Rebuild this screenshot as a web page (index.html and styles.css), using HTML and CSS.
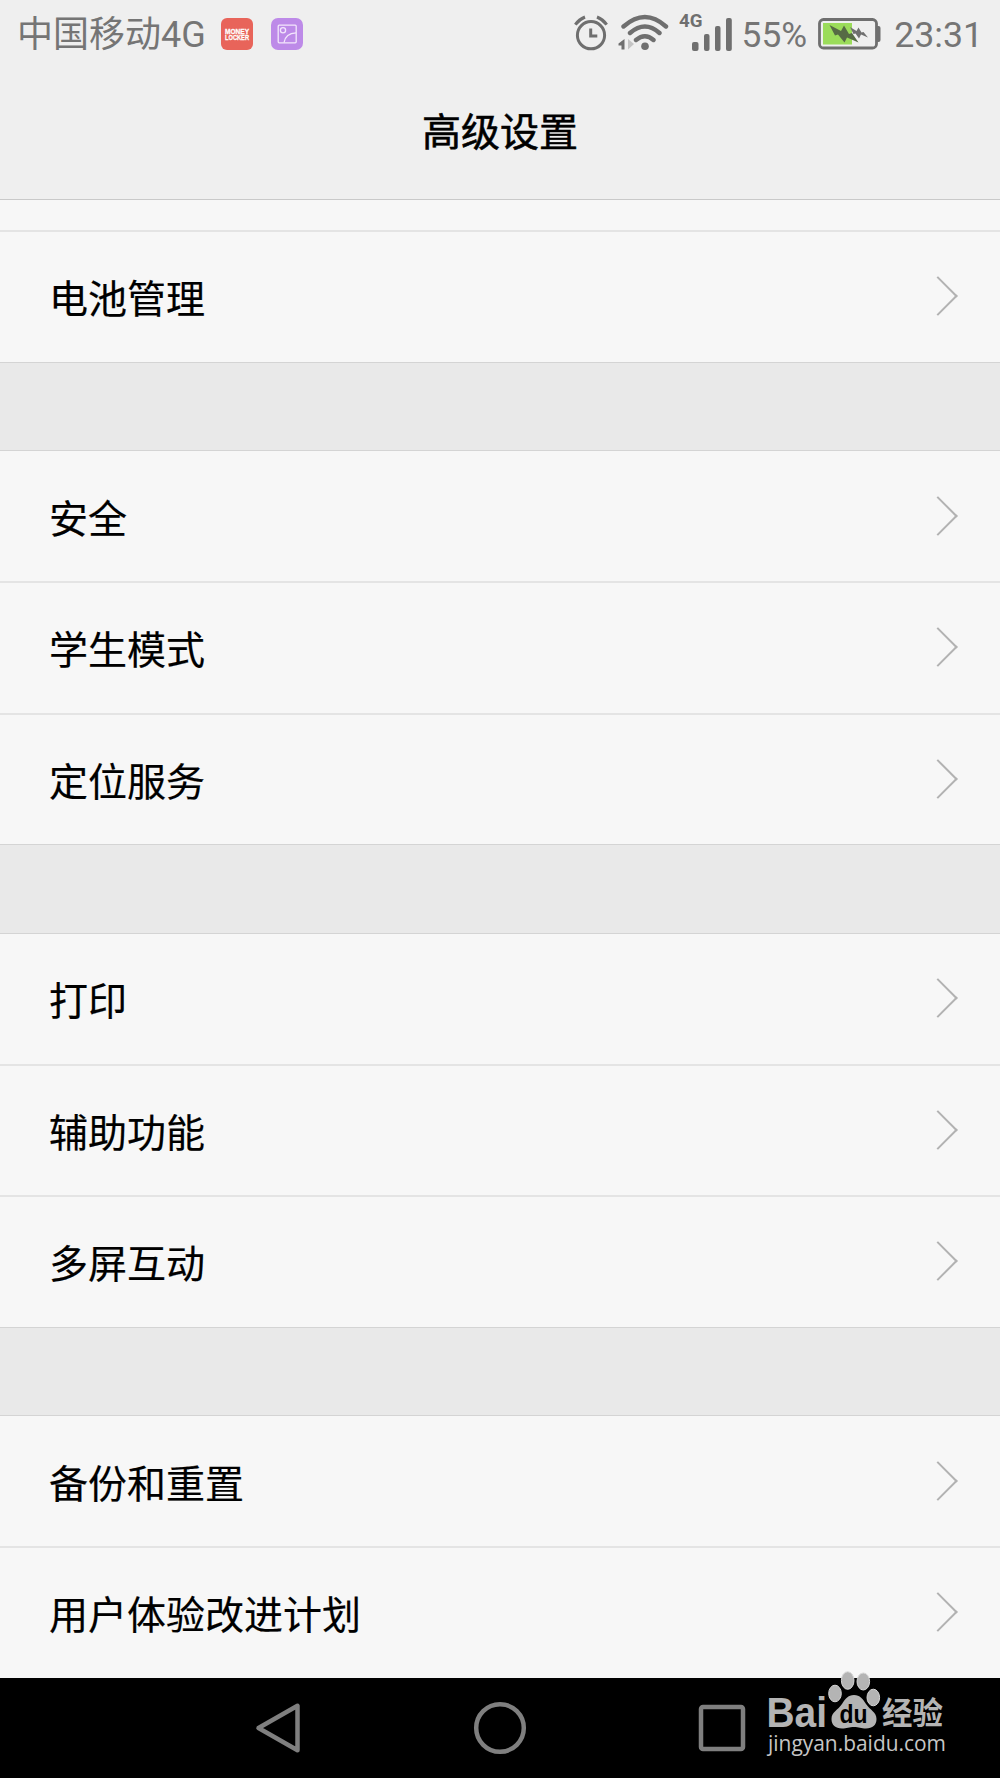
FILE: index.html
```
<!DOCTYPE html>
<html lang="zh-CN">
<head>
  <meta charset="UTF-8">
  <meta name="viewport" content="width=device-width, initial-scale=1.0">
  <title>高级设置</title>
  <link rel="stylesheet" href="styles.css">
</head>
<body>
  <div class="screen">
    <!-- Status bar -->
    <div class="status-bar">
      <span class="carrier">中国移动4G</span>
      <svg class="app-icon" width="32" height="32" viewBox="0 0 32 32">
        <rect width="32" height="32" rx="6" fill="#e8645a"/>
        <text class="app-text" x="4" y="15.7" textLength="24" lengthAdjust="spacingAndGlyphs">MONEY</text>
        <text class="app-text" x="4" y="22.3" textLength="24" lengthAdjust="spacingAndGlyphs">LOCKER</text>
      </svg>
      <svg class="app-icon gallery" width="32" height="32" viewBox="0 0 32 32">
        <rect width="32" height="32" rx="7" fill="#bd8ae8"/>
        <g fill="none" stroke="#f3e6fc" stroke-width="1.3">
          <rect x="7.2" y="7.2" width="18" height="17.6" rx="1"/>
          <circle cx="12" cy="12.3" r="2.6"/>
          <path d="M13 24.6C14 18.5 18.5 15 25 14.8"/>
        </g>
      </svg>

      <div class="status-right">
        <svg class="alarm" width="34" height="36" viewBox="0 0 34 36" fill="none" stroke="#6f6f6f">
          <circle cx="17" cy="20.2" r="13.6" stroke-width="3"/>
          <path d="M16.7 13.5v7.6h6.6" stroke-width="3"/>
          <path d="M1.3 9.6Q5 4.5 11 2M32.7 9.6Q29 4.5 23 2" stroke-width="3"/>
        </svg>
        <svg class="wifi" width="52" height="38" viewBox="0 0 52 38" fill="none" stroke="#6f6f6f" stroke-width="4.4" stroke-linecap="round">
          <path d="M5.5 12.5Q27 -6.500 48 12.5M12 19Q27 6 41.5 19M18 26Q27 18.5 35.5 26"/>
          <circle cx="27" cy="32.3" r="3.8" fill="#6f6f6f" stroke="none"/>
          <path d="M6.5 25v10.5H3.5v-4H.5v-2z" fill="#6f6f6f" stroke="none"/>
          <path d="M10 25v10.5l6-5.5z" fill="#c4c4c4" stroke="none"/>
        </svg>
        <svg class="signal" width="54" height="42" viewBox="0 0 54 42">
          <text class="signal-text" x="0" y="14.5" textLength="23.5" lengthAdjust="spacingAndGlyphs">4G</text>
          <g fill="#6f6f6f">
            <rect x="13" y="30" width="6.5" height="9" rx="2"/>
            <rect x="25" y="22" width="5.5" height="17" rx="2"/>
            <rect x="36" y="14" width="5.5" height="25" rx="2"/>
            <rect x="47" y="6" width="5.8" height="33" rx="2"/>
          </g>
        </svg>
        <span class="percent">55%</span>
        <svg class="battery" width="64" height="32" viewBox="0 0 64 32">
          <rect x="1.5" y="1.5" width="57" height="28.5" rx="4" fill="none" stroke="#6f6f6f" stroke-width="2.8"/>
          <path d="M59 8h1.5q2 0 2 2v12q0 2-2 2H59z" fill="#6f6f6f"/>
          <rect x="5" y="5" width="29" height="21.5" fill="#9bdc5a"/>
          <path d="M11.5 7L23 13l3-5.5 5 8.500 3-1 6.5 9.5-11.5-5-2.5 5-6.5-8-3 1z" fill="#566b45"/>
          <path d="M32 9l6.5 4 2-3.5 3 5 2-.5 4.500 5.500-7-3-2 4-3.500-5-2 .5z" fill="#6f6f6f"/>
        </svg>
        <span class="clock">23:31</span>
      </div>
    </div>

    <!-- Title -->
    <header class="header">
      <h1>高级设置</h1>
    </header>

    <!-- Settings list -->
    <main class="list">
      <div class="row-peek"></div>
      <section class="group">
        <a class="row"><span>电池管理</span><i class="arrow"></i></a>
      </section>
      <section class="group">
        <a class="row"><span>安全</span><i class="arrow"></i></a>
        <a class="row"><span>学生模式</span><i class="arrow"></i></a>
        <a class="row"><span>定位服务</span><i class="arrow"></i></a>
      </section>
      <section class="group">
        <a class="row"><span>打印</span><i class="arrow"></i></a>
        <a class="row"><span>辅助功能</span><i class="arrow"></i></a>
        <a class="row"><span>多屏互动</span><i class="arrow"></i></a>
      </section>
      <section class="group">
        <a class="row"><span>备份和重置</span><i class="arrow"></i></a>
        <a class="row"><span>用户体验改进计划</span><i class="arrow"></i></a>
      </section>
    </main>

    <!-- Navigation bar -->
    <nav class="nav-bar">
      <svg width="54" height="54" viewBox="0 0 54 54">
        <path d="M46.5 4.8v44.4L7.5 27z"/>
      </svg>
      <svg width="54" height="54" viewBox="0 0 54 54">
        <circle cx="27" cy="27" r="23.8"/>
      </svg>
      <svg width="54" height="54" viewBox="0 0 54 54">
        <rect x="6" y="6" width="42" height="42" rx="2"/>
      </svg>
    </nav>

    <!-- Watermark -->
    <svg class="watermark" width="190" height="90" viewBox="0 0 190 90">
      <g class="mark">
        <text class="mark-bai" x="4.5" y="56" textLength="60.5" lengthAdjust="spacingAndGlyphs">Bai</text>
        <g stroke="#d8d8d8" stroke-width="1">
          <ellipse cx="73" cy="22.5" rx="6.3" ry="8.3"/>
          <ellipse cx="85.7" cy="9.5" rx="6.3" ry="8.8"/>
          <ellipse cx="101.3" cy="10.5" rx="6.3" ry="8.5"/>
          <ellipse cx="111.3" cy="26.5" rx="6.3" ry="8.3"/>
        </g>
        <path d="M92 24c6 0 9 4 12 9 4 6 10.5 8 10.5 15 0 6-4 9.5-10.5 9.5-5 0-7-1.500-12-1.500s-7 1.500-12 1.500c-6.500 0-10.5-3.500-10.5-9.500 0-7 6.500-9 10.5-15 3-5 6-9 12-9z"/>
        <text class="mark-du" x="77.5" y="51.5" textLength="28" lengthAdjust="spacingAndGlyphs">du</text>
        <text class="mark-cn" x="120" y="53" textLength="61" lengthAdjust="spacingAndGlyphs">经验</text>
      </g>
      <text class="mark-url" x="6" y="79.5" textLength="178" lengthAdjust="spacingAndGlyphs">jingyan.baidu.com</text>
    </svg>
  </div>
</body>
</html>
```
FILE: styles.css
```
* {
  box-sizing: border-box;
}

body {
  margin: 0;
  background: #e9e9e9;
  font-family: Roboto, "Noto Sans CJK SC", sans-serif;
}

.screen {
  position: relative;
  display: flex;
  flex-direction: column;
  width: 1000px;
  height: 1778px;
  overflow: hidden;
}

svg {
  display: block;
  flex: none;
}

/* Status bar */
.status-bar {
  display: flex;
  align-items: center;
  height: 68px;
  padding: 0 17px 0 17px;
  background: #efefef;
  color: #757575;
}

.carrier {
  width: 204px;
  padding-top: 2px;
  font-size: 36px;
  line-height: 66px;
  white-space: nowrap;
}

.app-icon.gallery {
  margin-left: 18px;
}

.app-text {
  font: bold 8px "Liberation Sans", sans-serif;
  fill: #fff;
  stroke: #fff;
  stroke-width: 0.3px;
}

.status-right {
  display: flex;
  align-items: center;
  margin-left: auto;
  line-height: 66px;
  white-space: nowrap;
}

.alarm {
  margin-top: -2px;
}

.wifi {
  margin-left: 10px;
  margin-top: -2px;
}

.signal {
  margin-left: 9px;
  margin-top: -3px;
}

.signal-text {
  font: bold 18px Roboto, sans-serif;
  fill: #6f6f6f;
}

.percent {
  margin-left: 9px;
  padding-top: 2px;
  font-size: 35.3px;
}

.battery {
  margin-left: 11px;
}

.clock {
  margin-left: 12px;
  padding-top: 2px;
  font-size: 35.7px;
}

/* Title */
.header {
  height: 132px;
  background: #efefef;
  border-bottom: 1px solid #c9c9c9;
}

.header h1 {
  margin: 0;
  font-size: 39px;
  line-height: 131px;
  font-weight: 400;
  -webkit-text-stroke: 0.6px #000;
  text-align: center;
  color: #000;
}

/* List */
.list {
  height: 1478px;
}

.row-peek {
  height: 31.5px;
  background: #f7f7f7;
  border-bottom: 2px solid #e4e4e4;
}

.group {
  border-bottom: 1px solid #d4d4d4;
}

.group + .group {
  margin-top: 87.5px;
  border-top: 1px solid #d4d4d4;
}

.group:last-child {
  border-bottom: none;
}

.row {
  display: flex;
  align-items: center;
  justify-content: space-between;
  height: 130px;
  padding: 0 48px 1px 49px;
  background: #f7f7f7;
  color: #000;
  font-size: 39px;
  -webkit-text-stroke: 0.2px #000;
}

.row + .row {
  height: 131.5px;
  border-top: 2px solid #e4e4e4;
}

.arrow {
  width: 28px;
  height: 28px;
  border-top: 2px solid #b2b2b2;
  border-right: 2px solid #b2b2b2;
  transform: rotate(45deg);
}

/* Navigation bar */
.nav-bar {
  display: flex;
  justify-content: center;
  align-items: center;
  gap: 168px;
  height: 100px;
  background: #000;
}

.nav-bar svg {
  fill: none;
  stroke: #7f7f7f;
  stroke-width: 4.5;
  stroke-linejoin: round;
}

/* Watermark sits over the list and the navigation bar */
.watermark {
  position: absolute;
  left: 762px;
  top: 1671px;
}

.mark {
  fill: #b4b4b4;
}

.mark-bai {
  font: bold 42px "Liberation Sans", sans-serif;
}

.mark-du {
  font: bold 25px "Liberation Sans", sans-serif;
  fill: #000;
}

.mark-cn {
  font: bold 31px "Noto Sans CJK SC", sans-serif;
}

.mark-url {
  font: 22.5px "Open Sans", "Noto Sans", sans-serif;
  fill: #c6c6c6;
}
```
